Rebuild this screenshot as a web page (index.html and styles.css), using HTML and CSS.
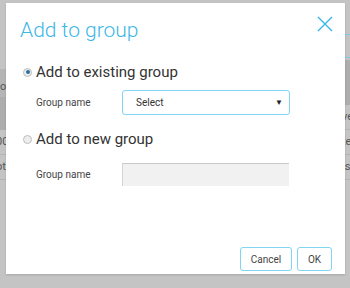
FILE: index.html
```html
<!DOCTYPE html>
<html>
<head>
<meta charset="utf-8">
<link rel="stylesheet" href="styles.css">
</head>
<body>
<div class="page">
  <div class="bg-left">
    <div class="bg-band"><span>o</span></div>
    <div class="bg-band dark"></div>
    <div class="bg-row"><span>00</span></div>
    <div class="bg-row"><span>ot</span></div>
  </div>
  <div class="bg-right">
    <div class="bg-btn"></div>
    <div class="bg-band dark tall"></div>
    <div class="bg-row"><span>ve</span></div>
    <div class="bg-row"><span>te</span></div>
    <div class="bg-row"><span>is</span></div>
  </div>
</div>
<div class="modal">
  <div class="modal-head">
    <h1 class="title">Add to group</h1>
    <svg class="close" width="16" height="16" viewBox="0 0 16 16"><path d="M1 1 L15 15 M15 1 L1 15" stroke="#35b8e6" stroke-width="1.4" fill="none"/></svg>
  </div>
  <div class="option">
    <span class="radio checked"></span><span class="opt-label">Add to existing group</span>
  </div>
  <div class="field">
    <span class="field-label">Group name</span>
    <div class="select"><span>Select</span><span class="arrow">&#9660;</span></div>
  </div>
  <div class="option second">
    <span class="radio"></span><span class="opt-label">Add to new group</span>
  </div>
  <div class="field second">
    <span class="field-label">Group name</span>
    <div class="input"></div>
  </div>
  <div class="footer">
    <button class="btn cancel">Cancel</button>
    <button class="btn ok">OK</button>
  </div>
</div>
</body>
</html>
```
FILE: styles.css
```css
html, body { margin: 0; padding: 0; }
body {
  width: 350px; height: 288px; overflow: hidden;
  background: #c4c4c4;
  font-family: Roboto, "Liberation Sans", sans-serif;
  position: relative;
}
.page { position: absolute; inset: 0; }
.bg-left { position: absolute; left: 0; top: 69px; width: 8px; }
.bg-right { position: absolute; right: 0; top: 34px; width: 6px; }
.bg-band { height: 28px; background: #b5b5b5; font-size: 11px; color: #555; line-height: 36px; overflow: hidden; }
.bg-band.dark { height: 33px; background: #adadad; }
.bg-band.tall { height: 45px; margin-top: 2px; }
.bg-row { height: 24px; border-bottom: 1px solid #b5b5b5; font-size: 11px; color: #555; line-height: 24px; overflow: hidden; white-space: nowrap; }
.bg-left .bg-row span { margin-left: -4px; }
.bg-right .bg-row span { margin-left: -2px; }
.bg-btn { height: 22px; border: 1px solid #7ccbe6; border-right: none; border-radius: 3px 0 0 3px; }
.modal {
  position: absolute; left: 6px; top: 3px; width: 339px; height: 271px;
  background: #fff;
  box-shadow: 0 1px 2px rgba(0,0,0,0.15);
  box-sizing: border-box;
  padding: 0 13px 0 14px;
  display: flex; flex-direction: column;
}
.modal-head { display: flex; justify-content: space-between; align-items: flex-start; height: 59px; }
.title { margin: 13px 0 0 0; font-weight: 300; font-size: 21px; color: #3db7e6; line-height: 28px; }
.close { margin-top: 13px; margin-right: -1px; }
.option { display: flex; align-items: center; height: 20px; margin-left: 3px; }
.option.second { margin-top: 14px; }
.radio {
  width: 7px; height: 7px; border-radius: 50%;
  border: 1px solid #bdbdbd; background: #eee; box-sizing: content-box; position: relative;
}
.radio.checked::after {
  content: ""; position: absolute; left: 1.5px; top: 1.5px; width: 4px; height: 4px; border-radius: 50%; background: #2a6fa0;
}
.opt-label { margin-left: 4px; font-size: 15px; color: #333; }
.field { display: flex; align-items: center; margin-top: 8px; height: 25px; }
.field.second { margin-top: 14px; height: 23px; }
.field-label { width: 102px; padding-left: 16px; box-sizing: border-box; font-size: 10px; color: #444; }
.select {
  width: 168px; height: 25px; box-sizing: border-box;
  border: 1.5px solid #7fd5f2; border-radius: 3px;
  display: flex; align-items: center; justify-content: space-between;
  padding: 0 6px 0 13px; font-size: 10px; color: #333;
}
.arrow { font-size: 8px; color: #222; }
.input { width: 167px; height: 23px; box-sizing: border-box; background: #f1f1f1; border-top: 1px solid #c9c9c9; border-left: 1px solid #d4d4d4; }
.footer { margin-top: auto; margin-bottom: 3px; display: flex; justify-content: flex-end; gap: 5px; height: 24px; }
.btn {
  font-family: Roboto, "Liberation Sans", sans-serif;
  height: 24px; padding: 0; background: #fff;
  border: 1.5px solid #7fd5f2; border-radius: 3px;
  font-size: 10px; color: #444;
}
.btn.cancel { width: 52px; }
.btn.ok { width: 35px; }
```
